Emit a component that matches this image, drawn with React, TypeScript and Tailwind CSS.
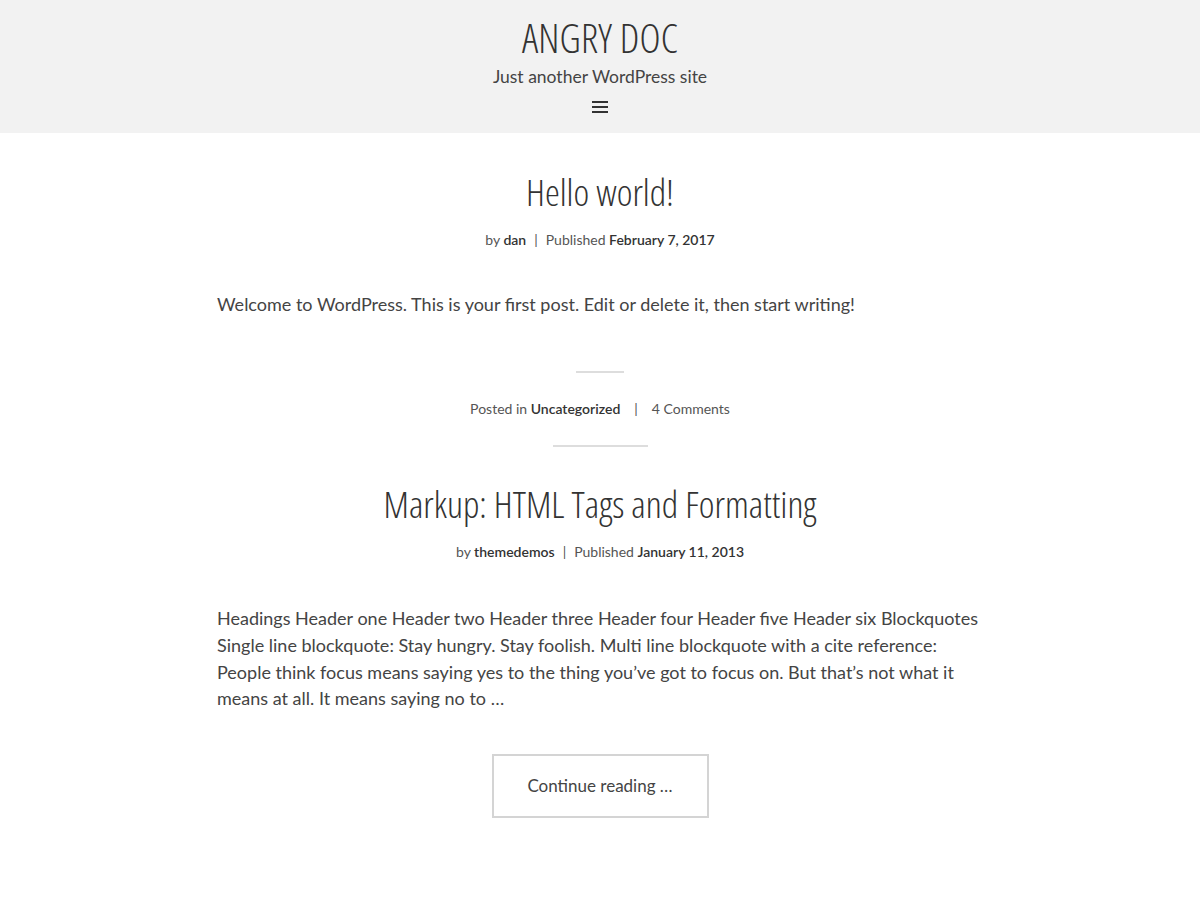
import { FC } from 'react';

const bodyFont = "font-['Lato','Open_Sans',sans-serif]";
const titleFont = "font-['Open_Sans',sans-serif] font-light font-stretch-condensed";

const Divider: FC<{ width: string }> = ({ width }) => (
    <div className={`${width} h-[2px] bg-[#dddddd] mx-auto`} />
);

const Meta: FC<{ author: string; date: string }> = ({ author, date }) => (
    <div className="text-[14px] leading-[20px] text-[#555] text-center">
        by <span className="font-semibold text-[#333]">{author}</span>
        <span className="mx-[8px]">|</span>
        Published <span className="font-semibold text-[#333]">{date}</span>
    </div>
);

const App: FC = () => {
    return (
        <div className={`min-h-[900px] bg-white ${bodyFont} text-[#444]`}>
            <header className="bg-[#f2f2f2] h-[133px] flex flex-col items-center pt-[18px]">
                <h1 className={`${titleFont} text-[40px] leading-none text-[#333] uppercase tracking-[0.2px]`}>Angry Doc</h1>
                <p className="text-[17.5px] leading-[20px] mt-[9px] text-[#444]">Just another WordPress site</p>
                <button className="mt-[14px]" aria-label="Menu">
                    <svg width="16" height="12" viewBox="0 0 16 12">
                        <rect x="0" y="0" width="16" height="2" fill="#333" />
                        <rect x="0" y="5" width="16" height="2" fill="#333" />
                        <rect x="0" y="10" width="16" height="2" fill="#333" />
                    </svg>
                </button>
            </header>

            <main className="max-w-[766px] mx-auto">
                <article className="pt-[40px]">
                    <h2 className={`${titleFont} text-[37.5px] leading-none text-center text-[#333]`}>Hello world!</h2>
                    <div className="mt-[19px]">
                        <Meta author="dan" date="February 7, 2017" />
                    </div>
                    <p className="mt-[41px] text-[18px] leading-[27px]">
                        Welcome to WordPress. This is your first post. Edit or delete it, then start writing!
                    </p>
                    <div className="mt-[53px]">
                        <Divider width="w-[48px]" />
                    </div>
                    <div className="mt-[26px] text-[14px] leading-[20px] text-[#555] text-center">
                        Posted in <span className="font-semibold text-[#333]">Uncategorized</span>
                        <span className="mx-[14px]">|</span>
                        4 Comments
                    </div>
                    <div className="mt-[26px]">
                        <Divider width="w-[95px]" />
                    </div>
                </article>

                <article className="pt-[38px]">
                    <h2 className={`${titleFont} text-[37.5px] leading-none text-center text-[#333]`}>
                        Markup: HTML Tags and Formatting
                    </h2>
                    <div className="mt-[20px]">
                        <Meta author="themedemos" date="January 11, 2013" />
                    </div>
                    <p className="mt-[43px] text-[18px] leading-[26.75px]">
                        Headings Header one Header two Header three Header four Header five Header six Blockquotes
                        Single line blockquote: Stay hungry. Stay foolish. Multi line blockquote with a cite reference:
                        People think focus means saying yes to the thing you&rsquo;ve got to focus on. But that&rsquo;s not what it
                        means at all. It means saying no to &hellip;
                    </p>
                    <div className="mt-[42px] flex justify-center">
                        <a className="w-[217px] h-[64px] border-2 border-[#d4d4d4] flex items-center justify-center text-[17px] text-[#444]">
                            Continue reading &hellip;
                        </a>
                    </div>
                </article>
            </main>
        </div>
    );
};

export default App;
